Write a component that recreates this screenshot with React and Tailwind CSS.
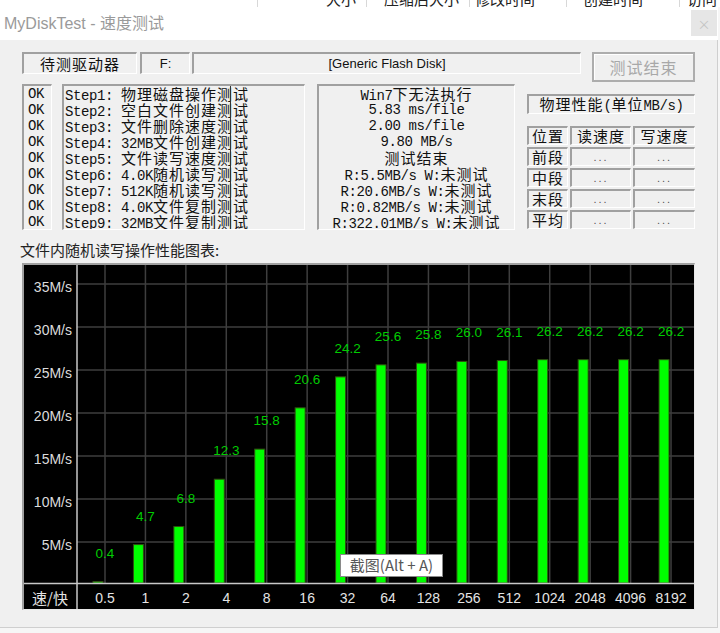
import React from "react";

const steps = [
  "Step1: 物理磁盘操作测试",
  "Step2: 空白文件创建测试",
  "Step3: 文件删除速度测试",
  "Step4: 32MB文件创建测试",
  "Step5: 文件读写速度测试",
  "Step6: 4.0K随机读写测试",
  "Step7: 512K随机读写测试",
  "Step8: 4.0K文件复制测试",
  "Step9: 32MB文件复制测试",
];

const results = [
  "Win7下无法执行",
  "5.83 ms/file",
  "2.00 ms/file",
  "9.80 MB/s",
  "测试结束",
  "R:5.5MB/s W:未测试",
  "R:20.6MB/s W:未测试",
  "R:0.82MB/s W:未测试",
  "R:322.01MB/s W:未测试",
];

const bars = [
  ["0.5", 0.4],
  ["1", 4.7],
  ["2", 6.8],
  ["4", 12.3],
  ["8", 15.8],
  ["16", 20.6],
  ["32", 24.2],
  ["64", 25.6],
  ["128", 25.8],
  ["256", 26.0],
  ["512", 26.1],
  ["1024", 26.2],
  ["2048", 26.2],
  ["4096", 26.2],
  ["8192", 26.2],
];

const sunken =
  "border-t-2 border-l-2 border-b border-r border-t-[#a0a0a0] border-l-[#a0a0a0] border-b-white border-r-white";

// SimSun-ish look: half-width ascii, full-width CJK
const Mix = ({ t }) =>
  t
    .split(/([\x20-\x7e]+)/)
    .filter(Boolean)
    .map((s, i) =>
      /^[\x20-\x7e]+$/.test(s) ? (
        <span key={i} className="font-['Liberation_Mono',monospace] text-[14px] tracking-[-0.4px] whitespace-pre">
          {s}
        </span>
      ) : (
        <span key={i} className="text-[15px] tracking-[1px]">
          {s}
        </span>
      )
    );

const Chart = () => {
  const zero = 320;
  const k = 8.6;
  const gx = (i) => 81 + i * 40.43;
  const yLines = [35, 30, 25, 20, 15, 10, 5];
  return (
    <svg width="670" height="344" className="block">
      <rect x="0" y="0" width="670" height="344" fill="#000" />
      {yLines.map((v, i) => (
        <line key={v} x1="53" x2="670" y1={19 + i * 43} y2={19 + i * 43} stroke="#3e3e3e" strokeWidth="1.5" />
      ))}
      {bars.map((b, i) => (
        <line key={b[0]} x1={gx(i)} x2={gx(i)} y1="0" y2="318" stroke="#3e3e3e" strokeWidth="1.5" />
      ))}
      {yLines.map((v, i) => (
        <text
          key={v}
          x="48"
          y={19 + i * 43 + 7.5}
          textAnchor="end"
          fill="#dcdcdc"
          fontSize="14"
          fontFamily="Liberation Sans, sans-serif"
        >
          {v}M/s
        </text>
      ))}
      {bars.map(([label, v], i) => {
        const top = zero - v * k;
        return (
          <g key={label}>
            <rect x={gx(i) - 12} y={top} width="10" height={318 - top} fill="#00ff00" stroke="#2f4f10" strokeWidth="1" />
            <text
              x={gx(i)}
              y={top - 24}
              textAnchor="middle"
              fill="#00cc00"
              fontSize="13.5"
              fontFamily="Liberation Sans, sans-serif"
            >
              {v.toFixed(1)}
            </text>
            <text
              x={gx(i)}
              y="338"
              textAnchor="middle"
              fill="#e4e4e4"
              fontSize="14"
              fontFamily="Liberation Sans, sans-serif"
            >
              {label}
            </text>
          </g>
        );
      })}
      <line x1="53" x2="53" y1="0" y2="344" stroke="#c8c8c8" strokeWidth="1.5" />
      <line x1="0" x2="670" y1="318.5" y2="318.5" stroke="#c8c8c8" strokeWidth="1.5" />
      <text x="26" y="339" textAnchor="middle" fill="#e4e4e4" fontSize="15" fontFamily="Noto Sans CJK SC, sans-serif">
        速/快
      </text>
    </svg>
  );
};

export default function App() {
  return (
    <div className="relative w-[720px] h-[633px] overflow-hidden bg-[#f6f6f6] font-['Noto_Sans_CJK_SC',sans-serif] text-[#111]">
      {/* window behind: list header */}
      <div className="h-[7px] overflow-hidden bg-white flex text-[15px] leading-[16px] text-[#222]">
        <div className="w-[258px] shrink-0 border-r border-[#d8d8d8]" />
        <div className="w-[109px] shrink-0 border-r border-[#d8d8d8] flex justify-end pr-[10px]">
          <span className="-mt-[9px]">大小</span>
        </div>
        <div className="w-[103px] shrink-0 border-r border-[#d8d8d8] pl-[17px]">
          <span className="block -mt-[9px]">压缩后大小</span>
        </div>
        <div className="w-[97px] shrink-0 border-r border-[#d8d8d8] pl-[5px]">
          <span className="block -mt-[9px]">修改时间</span>
        </div>
        <div className="w-[113px] shrink-0 border-r border-[#d8d8d8] pl-[16px]">
          <span className="block -mt-[9px]">创建时间</span>
        </div>
        <div className="pl-[7px]">
          <span className="block -mt-[9px]">访问</span>
        </div>
      </div>

      <div className="w-[718px]">
        {/* title bar */}
        <div className="h-[33px] bg-white flex items-start justify-between pl-[4px]">
          <div className="h-[33px] flex items-center text-[16px] text-[#9a9a9a] font-['Liberation_Sans','Noto_Sans_CJK_SC',sans-serif]">
            MyDiskTest - 速度测试
          </div>
          <div className="mt-[3px] mr-[1px] w-[26px] h-[26px] bg-[#e6e6e6] flex items-center justify-center text-[13px] text-[#c4c4c4] leading-none">
            ×
          </div>
        </div>

        {/* body */}
        <div className="h-[588px] bg-[#f0f0f0] border-r border-b border-[#cfcfcf] pl-[22px] pt-[12px]">
          {/* drive row */}
          <div className="h-[32px] flex items-start">
            <div className={`${sunken} w-[115px] h-[22px] flex items-center justify-center leading-[16px]`}>
              <Mix t="待测驱动器" />
            </div>
            <div className={`${sunken} ml-[3px] w-[50px] h-[22px] flex items-center justify-center text-[13px] font-['Liberation_Sans',sans-serif]`}>
              F:
            </div>
            <div className={`${sunken} ml-[2px] w-[389px] h-[22px] flex items-center justify-center text-[13px] font-['Liberation_Sans',sans-serif]`}>
              [Generic Flash Disk]
            </div>
            <div className="ml-[11px] w-[103px] h-[30px] border-2 border-[#adadad] bg-[#f0f0f0] flex items-center justify-center text-[#a8a8a8] leading-[16px] shadow-[inset_1px_1px_0_#ffffff]">
              <span className="text-[16px] tracking-[1px]">测试结束</span>
            </div>
          </div>

          {/* status row */}
          <div className="flex items-start">
            <div className={`${sunken} w-[30px] h-[146px] pl-[4px] leading-[16px] overflow-hidden`}>
              {steps.map((s) => (
                <div key={s} className="h-[16px] flex items-baseline">
                  <Mix t="OK" />
                </div>
              ))}
            </div>
            <div className={`${sunken} relative ml-[10px] w-[243px] h-[146px] pl-[1px] leading-[16px] overflow-hidden whitespace-nowrap`}>
              {steps.map((s) => (
                <div key={s} className="h-[16px] flex items-baseline">
                  <Mix t={s} />
                </div>
              ))}
              <div className="absolute left-[166px] top-0 bottom-0 w-px bg-[#333]" />
            </div>
            <div className={`${sunken} ml-[12px] w-[198px] h-[146px] leading-[16px] overflow-hidden whitespace-nowrap`}>
              {results.map((s) => (
                <div key={s} className="h-[16px] flex items-baseline justify-center">
                  <Mix t={s} />
                </div>
              ))}
            </div>
            <div className="ml-[12px] w-[168px]">
              <div className={`${sunken} mt-[10px] h-[20px] flex items-center justify-center leading-[16px] whitespace-nowrap`}>
                <div className="flex items-baseline">
                  <Mix t="物理性能(单位MB/s)" />
                </div>
              </div>
              <div className="mt-[12px] grid grid-cols-[41px_61px_62px] grid-rows-[19px_19px_19px_19px_19px] gap-[2px] leading-[16px]">
                {["位置", "读速度", "写速度"].map((h) => (
                  <div key={h} className={`${sunken} flex items-center justify-center`}>
                    <Mix t={h} />
                  </div>
                ))}
                {["前段", "中段", "末段", "平均"].map((r) => (
                  <React.Fragment key={r}>
                    <div className={`${sunken} flex items-center justify-center`}>
                      <Mix t={r} />
                    </div>
                    <div className={`${sunken} flex items-center justify-center text-[11px] text-[#555] tracking-[2px] font-['Liberation_Sans',sans-serif]`}>
                      ...
                    </div>
                    <div className={`${sunken} flex items-center justify-center text-[11px] text-[#555] tracking-[2px] font-['Liberation_Sans',sans-serif]`}>
                      ...
                    </div>
                  </React.Fragment>
                ))}
              </div>
            </div>
          </div>

          {/* chart */}
          <div className="mt-[12px] -ml-[2px] h-[17px] flex items-center text-[15px] text-[#222]">
            文件内随机读写操作性能图表:
          </div>
          <div className="mt-[4px] w-[673px] h-[347px] border-t-2 border-l-2 border-r border-b border-t-[#a0a0a0] border-l-[#a0a0a0] border-r-[#e8e8e8] border-b-[#e8e8e8]">
            <Chart />
          </div>
        </div>
      </div>

      {/* hover tooltip */}
      <div className="absolute left-[340px] top-[554px] w-[103px] h-[23px] bg-white border border-[#8a8a8a] flex items-center justify-center text-[15px] text-[#575757] whitespace-nowrap">
        截图(Alt + A)
      </div>
    </div>
  );
}
